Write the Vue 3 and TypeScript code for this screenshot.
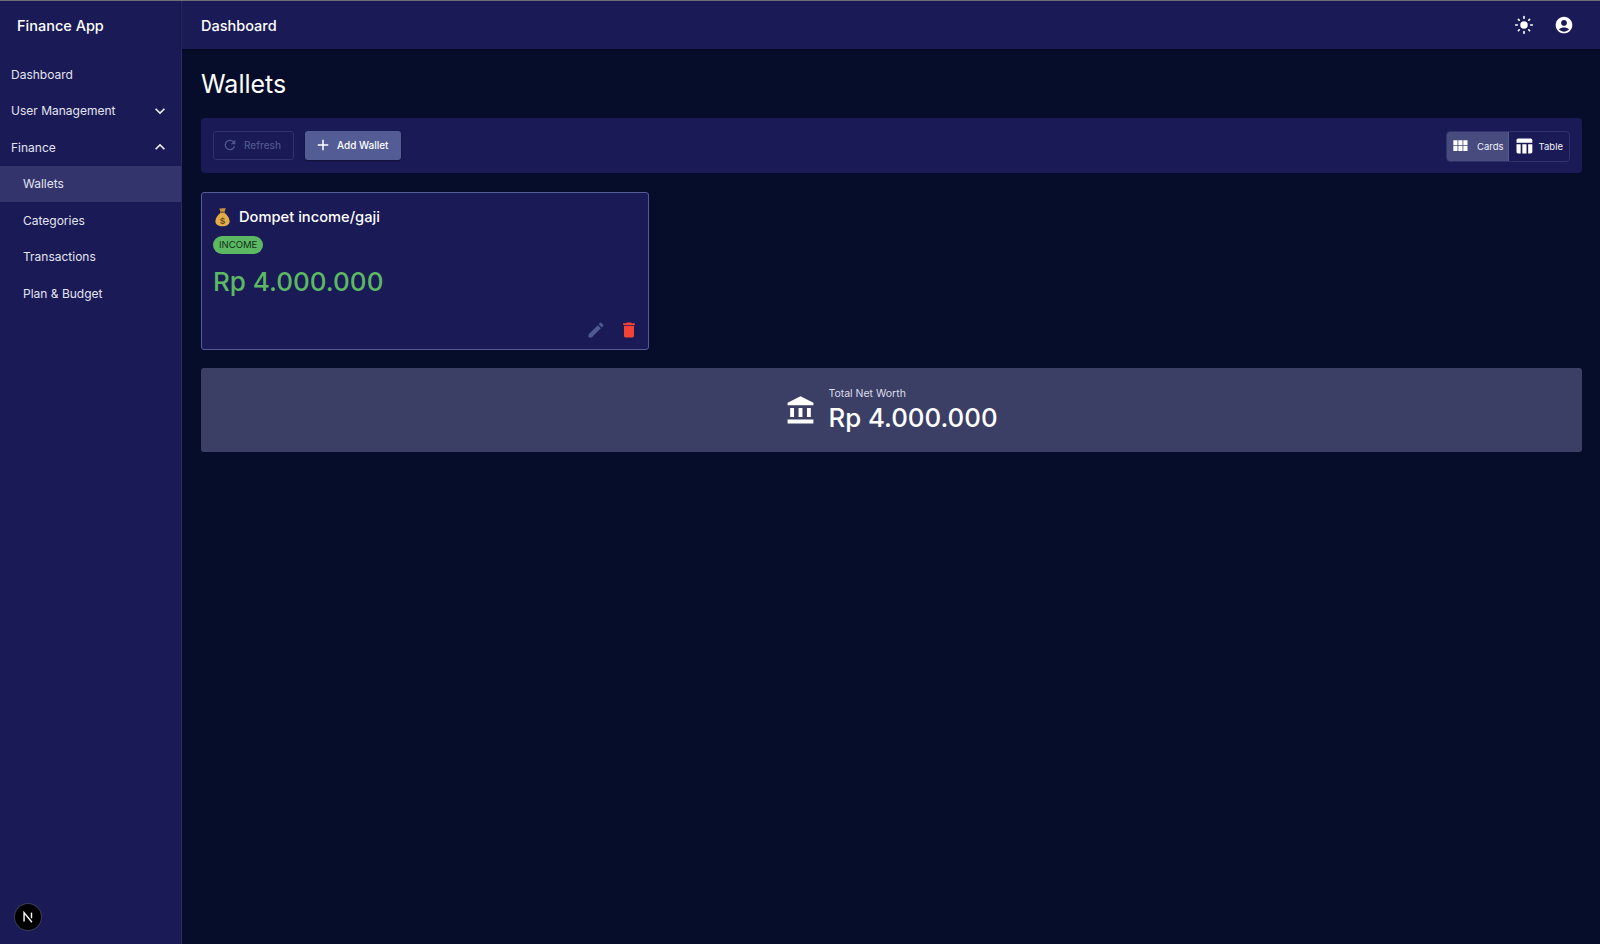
<template>
  <div class="app">
    <aside class="sidebar">
      <div class="brand">Finance App</div>
      <nav class="nav">
        <template v-for="item in navItems" :key="item.label">
          <div class="nav-item" :class="{ child: item.child, active: item.active }">
            <span>{{ item.label }}</span>
            <svg v-if="item.chevron" class="chevron" viewBox="0 0 24 24" fill="currentColor">
              <path v-if="item.chevron === 'down'" d="M7.41 8.59 12 13.17l4.59-4.58L18 10l-6 6-6-6z" />
              <path v-else d="M7.41 15.41 12 10.83l4.59 4.58L18 14l-6-6-6 6z" />
            </svg>
          </div>
        </template>
      </nav>
      <div class="sidebar-spacer" />
      <div class="next-badge">
        <svg viewBox="0 0 16 16" width="14" height="14" fill="none" stroke="#fff" stroke-width="1.6">
          <path d="M3.5 13V3l9 11" />
          <path d="M12 3v6.5" />
        </svg>
      </div>
    </aside>

    <div class="main">
      <header class="topbar">
        <span class="topbar-title">Dashboard</span>
        <div class="topbar-icons">
          <svg viewBox="0 0 24 24" width="20" height="20" fill="#fff">
            <path d="M12 7.5a4.5 4.5 0 1 0 0 9 4.5 4.5 0 0 0 0-9zM2 13h2a1 1 0 0 0 0-2H2a1 1 0 0 0 0 2zm18 0h2a1 1 0 0 0 0-2h-2a1 1 0 0 0 0 2zM11 2v2a1 1 0 0 0 2 0V2a1 1 0 0 0-2 0zm0 18v2a1 1 0 0 0 2 0v-2a1 1 0 0 0-2 0zM5.99 4.58a1 1 0 0 0-1.41 1.41l1.06 1.06a1 1 0 0 0 1.41-1.41L5.99 4.58zm12.37 12.37a1 1 0 0 0-1.41 1.41l1.06 1.06a1 1 0 0 0 1.41-1.41l-1.06-1.06zm1.06-10.96a1 1 0 0 0-1.41-1.41l-1.06 1.06a1 1 0 0 0 1.41 1.41l1.06-1.06zM7.05 18.36a1 1 0 0 0-1.41-1.41l-1.06 1.06a1 1 0 0 0 1.41 1.41l1.06-1.06z" />
          </svg>
          <svg viewBox="0 0 24 24" width="20" height="20" fill="#fff">
            <path d="M12 2C6.48 2 2 6.48 2 12s4.48 10 10 10 10-4.48 10-10S17.52 2 12 2zm0 4c1.93 0 3.5 1.57 3.5 3.5S13.93 13 12 13s-3.5-1.57-3.5-3.5S10.07 6 12 6zm0 14c-2.03 0-4.43-.82-6.14-2.88C7.55 15.8 9.68 15 12 15s4.45.8 6.14 2.12C16.43 19.18 14.03 20 12 20z" />
          </svg>
        </div>
      </header>

      <main class="content">
        <h1 class="page-title">Wallets</h1>

        <div class="toolbar">
          <div class="toolbar-actions">
            <button class="btn btn-disabled">
              <svg viewBox="0 0 24 24" width="16" height="16" fill="currentColor">
                <path d="M17.65 6.35A7.96 7.96 0 0 0 12 4a8 8 0 1 0 7.73 10h-2.08A6 6 0 1 1 12 6c1.66 0 3.14.69 4.22 1.78L13 11h7V4l-2.35 2.35z" />
              </svg>
              Refresh
            </button>
            <button class="btn btn-primary">
              <svg viewBox="0 0 24 24" width="18" height="18" fill="currentColor">
                <path d="M19 13h-6v6h-2v-6H5v-2h6V5h2v6h6v2z" />
              </svg>
              Add Wallet
            </button>
          </div>
          <div class="toggle">
            <div class="toggle-option selected">
              <svg viewBox="0 0 24 24" width="20" height="20" fill="#fff">
                <path d="M4 11h5V5H4v6zm0 7h5v-6H4v6zm6 0h5v-6h-5v6zm6 0h5v-6h-5v6zm-6-7h5V5h-5v6zm6-6v6h5V5h-5z" />
              </svg>
              Cards
            </div>
            <div class="toggle-option">
              <svg viewBox="0 0 24 24" width="20" height="20" fill="#fff">
                <path d="M10 10.02h5V21h-5zM17 21h3c1.1 0 2-.9 2-2v-9h-5v11zm3-18H5c-1.1 0-2 .9-2 2v3h19V5c0-1.1-.9-2-2-2zM3 19c0 1.1.9 2 2 2h3V10H3v9z" />
              </svg>
              Table
            </div>
          </div>
        </div>

        <div class="wallet-grid">
          <div v-for="wallet in wallets" :key="wallet.name" class="wallet-card">
            <div class="wallet-name">
              <svg class="wallet-emoji" viewBox="0 0 20 24" width="17" height="20">
                <path d="M6 1.5c1 .8 2.5.3 4 0s3 .3 4-.2l-1.8 5H7.8z" fill="#c9963a" />
                <rect x="7" y="5.5" width="6" height="1.8" rx=".6" fill="#8a5a22" />
                <path d="M7.5 7.2h5C16 9.5 18.5 13.5 18.5 17c0 4-3.5 6-8.500 6s-8.500-2-8.500-6c0-3.500 2.500-7.500 6-9.800z" fill="#e0ad4a" />
                <text x="10" y="20" text-anchor="middle" font-size="11" font-weight="700" fill="#6b4a14" font-family="Liberation Sans, sans-serif">$</text>
              </svg>
              <span>{{ wallet.name }}</span>
            </div>
            <span class="chip">{{ wallet.type }}</span>
            <div class="wallet-amount">{{ wallet.amount }}</div>
            <div class="wallet-actions">
              <svg viewBox="0 0 24 24" width="20" height="20" fill="#4f5a92">
                <path d="M3 17.25V21h3.75L17.81 9.94l-3.75-3.75L3 17.25zM20.71 7.04a1 1 0 0 0 0-1.41l-2.34-2.34a1 1 0 0 0-1.41 0l-1.83 1.83 3.75 3.75 1.83-1.83z" />
              </svg>
              <svg viewBox="0 0 24 24" width="20" height="20" fill="#f44336">
                <path d="M6 19c0 1.1.9 2 2 2h8c1.1 0 2-.9 2-2V7H6v12zM19 4h-3.5l-1-1h-5l-1 1H5v2h14V4z" />
              </svg>
            </div>
          </div>
        </div>

        <div class="networth">
          <svg viewBox="0 0 24 24" width="31" height="31" fill="#fff">
            <path d="M4 10h3v7H4zM10.5 10h3v7h-3zM2 19h20v3H2zM17 10h3v7h-3zM12 1 2 6v2h20V6z" />
          </svg>
          <div>
            <div class="networth-label">Total Net Worth</div>
            <div class="networth-amount">{{ netWorth }}</div>
          </div>
        </div>
      </main>
    </div>
  </div>
</template>

<script setup lang="ts">
interface NavItem {
  label: string
  child?: boolean
  active?: boolean
  chevron?: 'up' | 'down'
}

const navItems: NavItem[] = [
  { label: 'Dashboard' },
  { label: 'User Management', chevron: 'down' },
  { label: 'Finance', chevron: 'up' },
  { label: 'Wallets', child: true, active: true },
  { label: 'Categories', child: true },
  { label: 'Transactions', child: true },
  { label: 'Plan & Budget', child: true },
]

const wallets = [{ name: 'Dompet income/gaji', type: 'INCOME', amount: 'Rp 4.000.000' }]
const netWorth = 'Rp 4.000.000'
</script>

<style>
html,
body {
  margin: 0;
  background: #050d2b;
}
</style>

<style scoped>
.app {
  display: flex;
  height: 944px;
  overflow: hidden;
  font-family: "Inter", "Noto Sans", sans-serif;
  color: #fff;
  background: #050d2b;
  border-top: 1px solid #6f6f78;
  box-sizing: border-box;
}

.sidebar {
  width: 182px;
  flex-shrink: 0;
  display: flex;
  flex-direction: column;
  box-sizing: border-box;
  background: #1a1a56;
  border-right: 1px solid #2a2a68;
}

.brand {
  height: 49px;
  display: flex;
  align-items: center;
  padding-left: 17px;
  font-size: 14.5px;
  font-weight: 500;
}

.nav {
  padding-top: 6px;
}

.nav-item {
  height: 36.5px;
  display: flex;
  align-items: center;
  justify-content: space-between;
  padding: 0 11px;
  font-size: 12px;
  color: #e4e4ee;
}

.nav-item.child {
  padding-left: 23px;
}

.nav-item.active {
  background: #33346c;
}

.chevron {
  width: 20px;
  height: 20px;
  color: #f0f0f5;
}

.sidebar-spacer {
  flex: 1;
}

.next-badge {
  width: 26px;
  height: 26px;
  margin: 0 0 14px 15px;
  border-radius: 50%;
  background: #000;
  box-shadow: 0 0 0 1px #3a3a55;
  display: flex;
  align-items: center;
  justify-content: center;
}

.main {
  flex: 1;
  min-width: 0;
  display: flex;
  flex-direction: column;
}

.topbar {
  height: 48px;
  flex-shrink: 0;
  display: flex;
  align-items: center;
  justify-content: space-between;
  padding: 0 26px 0 19px;
  background: #1a1a56;
  box-shadow: 0 1px 3px rgba(0, 0, 0, 0.4);
}

.topbar-title {
  font-size: 14.5px;
  font-weight: 500;
}

.topbar-icons {
  display: flex;
  align-items: center;
  gap: 20px;
}

.content {
  flex: 1;
  padding: 0 18px 0 19px;
}

.page-title {
  margin: 17px 0 16px;
  font-size: 25px;
  line-height: 36px;
  font-weight: 400;
}

.toolbar {
  height: 55px;
  display: flex;
  align-items: center;
  justify-content: space-between;
  padding: 0 12px;
  border-radius: 4px;
  background: #1a1a56;
}

.toolbar-actions {
  display: flex;
  gap: 11px;
}

.btn {
  height: 29px;
  margin-bottom: 1px;
  display: flex;
  align-items: center;
  gap: 6px;
  padding: 0 12px 0 8px;
  border-radius: 3px;
  font-family: inherit;
  font-size: 10px;
  font-weight: 500;
}

.btn-disabled {
  background: transparent;
  color: #50568c;
  border: 1px solid #30326c;
}

.btn-primary {
  padding-left: 9px;
  gap: 5px;
  background: #535c94;
  color: #fff;
  border: none;
  box-shadow: 0 1px 2px rgba(0, 0, 0, 0.4);
}

.toggle {
  display: flex;
  height: 31px;
  margin-top: 1px;
  border: 1px solid #30326c;
  border-radius: 4px;
  box-sizing: border-box;
  overflow: hidden;
}

.toggle-option {
  display: flex;
  align-items: center;
  gap: 5px;
  padding: 0 6px 0 5px;
  font-size: 9.5px;
  color: #f0f0f5;
}

.toggle-option.selected {
  gap: 7px;
  padding: 0 4px 0 3px;
  background: #484b7e;
  border-right: 1px solid #5a5c8e;
}

.wallet-grid {
  margin-top: 19px;
}

.wallet-card {
  width: 448px;
  height: 158px;
  box-sizing: border-box;
  padding: 14px 9px 0 11px;
  border: 1px solid #535c94;
  border-radius: 3px;
  background: #1a1a56;
  display: flex;
  flex-direction: column;
  align-items: flex-start;
}

.wallet-name {
  display: flex;
  align-items: center;
  gap: 8px;
  font-size: 14.7px;
  font-weight: 500;
}

.wallet-emoji {
  margin-left: 1px;
}

.chip {
  margin-top: 9px;
  padding: 0 6px;
  height: 18px;
  line-height: 18px;
  border-radius: 9px;
  background: #5cb862;
  color: #10301a;
  font-size: 9.5px;
}

.wallet-amount {
  margin-top: 12px;
  font-size: 26px;
  font-weight: 500;
  color: #5cb862;
}

.wallet-actions {
  margin-top: auto;
  margin-bottom: 9px;
  align-self: flex-end;
  display: flex;
  gap: 13px;
}

.networth {
  margin-top: 18px;
  height: 84px;
  border-radius: 3px;
  background: #3b3f66;
  display: flex;
  align-items: center;
  justify-content: center;
  gap: 12px;
}

.networth-label {
  font-size: 10.5px;
  margin-bottom: 2px;
  color: #dcdde8;
}

.networth-amount {
  font-size: 25.8px;
  font-weight: 500;
}
</style>
